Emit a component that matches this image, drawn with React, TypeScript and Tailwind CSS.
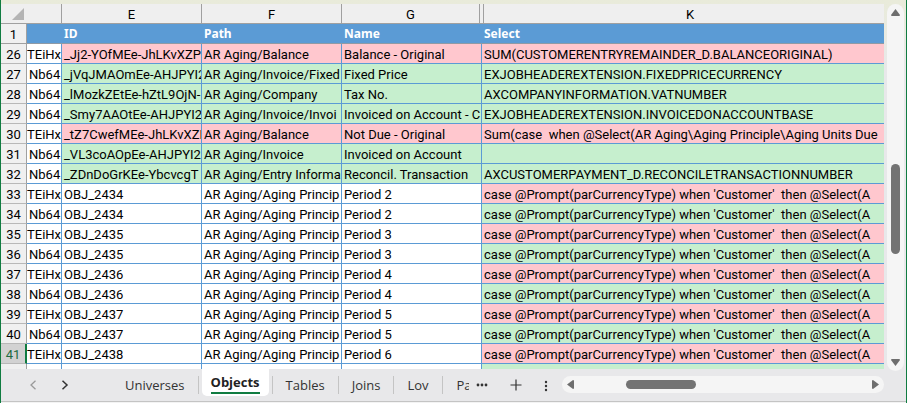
import React, { useState } from 'react';
import clsx from 'clsx';

type Fill = 'red' | 'green' | 'none';

interface Row {
  num: number;
  prev: string;
  id: string;
  path: string;
  name: string;
  select: string;
  fill: Fill;
  selectFill: Fill;
}

const fills: Record<Fill, string> = {
  red: 'bg-[#ffc7ce]',
  green: 'bg-[#c6efce]',
  none: 'bg-white',
};

const objects: [string, string, string, string, Fill][] = [
  ['_Jj2-YOfMEe-JhLKvXZPc', 'AR Aging/Balance', 'Balance - Original', 'SUM(CUSTOMERENTRYREMAINDER_D.BALANCEORIGINAL)', 'red'],
  ['_jVqJMAOmEe-AHJPYI2', 'AR Aging/Invoice/Fixed', 'Fixed Price', 'EXJOBHEADEREXTENSION.FIXEDPRICECURRENCY', 'green'],
  ['_lMozkZEtEe-hZtL9OjN-', 'AR Aging/Company', 'Tax No.', 'AXCOMPANYINFORMATION.VATNUMBER', 'green'],
  ['_Smy7AAOtEe-AHJPYI2', 'AR Aging/Invoice/Invoi', 'Invoiced on Account - C', 'EXJOBHEADEREXTENSION.INVOICEDONACCOUNTBASE', 'green'],
  ['_tZ7CwefMEe-JhLKvXZP', 'AR Aging/Balance', 'Not Due - Original', 'Sum(case  when @Select(AR Aging\\Aging Principle\\Aging Units Due', 'red'],
  ['_VL3coAOpEe-AHJPYI2', 'AR Aging/Invoice', 'Invoiced on Account', '', 'green'],
  ['_ZDnDoGrKEe-YbcvcgT', 'AR Aging/Entry Informa', 'Reconcil. Transaction', 'AXCUSTOMERPAYMENT_D.RECONCILETRANSACTIONNUMBER', 'green'],
];

const periodSelect = "case @Prompt(parCurrencyType) when 'Customer'  then @Select(A";

const rows: Row[] = [
  ...objects.map(([id, path, name, select, fill], i) => ({
    num: 26 + i,
    prev: fill === 'red' ? 'TEiHxI' : 'Nb64.',
    id,
    path,
    name,
    select,
    fill,
    selectFill: fill,
  })),
  ...Array.from({ length: 9 }, (_, i) => ({
    num: 33 + i,
    prev: i % 2 === 0 ? 'TEiHxI' : 'Nb64.',
    id: `OBJ_${2434 + Math.floor(i / 2)}`,
    path: 'AR Aging/Aging Princip',
    name: `Period ${2 + Math.floor(i / 2)}`,
    select: periodSelect,
    fill: 'none' as Fill,
    selectFill: (i % 2 === 0 ? 'red' : 'green') as Fill,
  })),
];

const columns = ['', 'E', 'F', 'G', 'K'];
const titles = ['', 'ID', 'Path', 'Name', 'Select'];
const tabs = ['Universes', 'Objects', 'Tables', 'Joins', 'Lov'];

const arrows = {
  up: 'M4.5 1 L9 7 Q9 8 8 8 H1 Q0 8 0 7 Z',
  down: 'M0 2 Q0 1 1 1 H8 Q9 1 9 2 L4.5 8 Z',
  left: 'M1 4.5 L7 0 Q8 0 8 1 V8 Q8 9 7 9 Z',
  right: 'M1 1 Q1 0 2 0 L8 4.5 L2 9 Q1 9 1 8 Z',
};

const ScrollArrow: React.FC<{ dir: keyof typeof arrows }> = ({ dir }) => (
  <button type="button" aria-label={`Scroll ${dir}`} className="shrink-0">
    <svg className="block h-[9px] w-[9px]" viewBox="0 0 9 9" fill="#6e6e6e">
      <path d={arrows[dir]} />
    </svg>
  </button>
);

const Sheet: React.FC = () => (
  <table className="w-full table-fixed border-separate border-spacing-0 whitespace-pre font-['Roboto',sans-serif] text-[13px] leading-[17px] text-black">
    <colgroup>
      <col className="w-[26px]" />
      <col className="w-[35px]" />
      <col className="w-[140px]" />
      <col className="w-[140px]" />
      <col className="w-[140px]" />
      <col />
    </colgroup>
    <thead>
      <tr className="h-5 bg-[#efefef]">
        <th className="border-b border-[#a0a0a0] p-0">
          <svg className="ml-auto mr-[3px] block h-3 w-3" viewBox="0 0 12 12">
            <path d="M12 0 V12 H0 Z" fill="#b4b4b4" />
          </svg>
        </th>
        {columns.map((col, i) => (
          <th key={i} className={clsx('border-b border-[#a0a0a0] p-0 font-normal', i < 3 && 'border-r')}>
            <div
              className={clsx(
                'h-[19px] border-[#a0a0a0] pt-0.5',
                col === 'G' && 'mr-0.5 border-r',
                col === 'K' && 'ml-px border-l pl-3'
              )}
            >
              {col}
            </div>
          </th>
        ))}
      </tr>
      <tr className="h-5 bg-[#5b9bd5] text-left text-white">
        <th className="border-b border-r border-[#a0a0a0] bg-[#f0f0f0] px-0 pb-0 pt-0.5 text-center font-normal text-black">1</th>
        {titles.map((title, i) => (
          <th key={i} className="border-b border-[#8f9aa5] py-0 pl-0.5 pr-0 font-['Noto_Sans',sans-serif] text-[12px] font-bold">
            {title}
          </th>
        ))}
      </tr>
    </thead>
    <tbody>
      {rows.map(row => (
        <tr key={row.num} className="h-5">
          <th
            className={clsx(
              'border-b border-b-[#b8b8b8] px-0 pb-0 pt-0.5 font-normal',
              row.num === 41
                ? 'border-r-2 border-r-[#107c41] bg-[#d2d2d2] text-[#1e6b41]'
                : 'border-r border-r-[#a0a0a0] bg-[#f0f0f0]'
            )}
          >
            {row.num}
          </th>
          <td
            className={clsx(
              'overflow-hidden border-b border-r border-[#5b9bd5] bg-white pb-0 pr-0 pt-0.5',
              row.prev === 'Nb64.' ? 'pl-0.5' : 'pl-0'
            )}
          >
            {row.prev}
          </td>
          {[row.id, row.path, row.name].map((text, i) => (
            <td key={i} className={clsx('overflow-hidden border-b border-r border-[#5b9bd5] pb-0 pl-0.5 pr-0 pt-0.5', fills[row.fill])}>
              {text}
            </td>
          ))}
          <td className={clsx('overflow-hidden border-b border-[#5b9bd5] pb-0 pl-0.5 pr-0 pt-0.5', fills[row.selectFill])}>
            {row.select}
          </td>
        </tr>
      ))}
      <tr className="h-[5px]">
        <th className="border-r border-[#a0a0a0] bg-[#f0f0f0] p-0" />
        {[0, 1, 2, 3].map(i => (
          <td key={i} className="border-r border-[#5b9bd5] bg-white p-0" />
        ))}
        <td className="bg-[#c6efce] p-0" />
      </tr>
    </tbody>
  </table>
);

const App: React.FC = () => {
  const [active, setActive] = useState('Objects');

  return (
    <div className="flex flex-col border-x border-[#107c41] bg-[#e8e8ea]">
      <div className="flex bg-linear-to-b from-[#e9ebda] to-[#e8e8ea] to-20%">
        <div className="min-w-0 flex-1 pt-1">
          <Sheet />
        </div>
        <div className="-mb-0.5 ml-[3px] mr-0.5 mt-1 flex w-[17px] flex-col items-center rounded-full bg-[#f5f5f5] py-1">
          <ScrollArrow dir="up" />
          <div className="grow-[147]" />
          <div className="h-[90px] w-[9px] rounded-full bg-[#737373]" />
          <div className="grow-[104]" />
          <ScrollArrow dir="down" />
        </div>
      </div>

      <div className="flex h-8 font-['Open_Sans',sans-serif] text-[13px] leading-5 text-[#333333]">
        <div className="flex w-[111px] shrink-0 items-center gap-6 pl-7 pb-px">
          <button type="button" aria-label="Previous sheet">
            <svg className="block h-2.5 w-2" viewBox="0 0 8 10" fill="none" stroke="#999" strokeWidth="1.3">
              <path d="M6.5 0.8 L2 5 L6.5 9.2" />
            </svg>
          </button>
          <button type="button" aria-label="Next sheet">
            <svg className="block h-2.5 w-2" viewBox="0 0 8 10" fill="none" stroke="#333" strokeWidth="1.5">
              <path d="M1.5 0.8 L6 5 L1.5 9.2" />
            </svg>
          </button>
        </div>
        <div className="flex shrink-0">
          {tabs.map(tab => (
            <div key={tab} className="flex items-center">
              {tab === active ? (
                <button
                  type="button"
                  className="mx-[3px] flex h-[27px] items-center self-start rounded-b-[5px] bg-white px-[9px] font-bold text-[#222222]"
                >
                  <span className="border-b-2 border-[#107c41]">{tab}</span>
                </button>
              ) : (
                <button type="button" onClick={() => setActive(tab)} className="h-full px-[13px]">
                  {tab}
                </button>
              )}
              <span className="h-[18px] border-r border-[#c4c4c4]" />
            </div>
          ))}
          <button type="button" className="w-[26px] overflow-hidden pl-[14px] text-left">
            Pa
          </button>
        </div>
        <div className="flex w-[93px] shrink-0 items-center justify-between pl-[7px] pr-[14px]">
          <button type="button" aria-label="More sheets">
            <svg className="block h-1 w-3" viewBox="0 0 12 4" fill="#333">
              <circle cx="2" cy="2" r="1.4" />
              <circle cx="6" cy="2" r="1.4" />
              <circle cx="10" cy="2" r="1.4" />
            </svg>
          </button>
          <button type="button" aria-label="New sheet">
            <svg className="block h-3 w-3" viewBox="0 0 12 12" stroke="#333" strokeWidth="1.2">
              <path d="M6 0.5 V11.5 M0.5 6 H11.5" />
            </svg>
          </button>
          <button type="button" aria-label="Resize tab bar" className="pt-0.5">
            <svg className="block h-3 w-1" viewBox="0 0 4 12" fill="#333">
              <circle cx="2" cy="2" r="1.2" />
              <circle cx="2" cy="6" r="1.2" />
              <circle cx="2" cy="10" r="1.2" />
            </svg>
          </button>
        </div>
        <div className="mb-2 mr-[22px] mt-[7px] flex flex-1 items-center rounded-full bg-[#f5f5f5] px-1">
          <ScrollArrow dir="left" />
          <div className="grow-[51]" />
          <div className="h-[9px] w-[70px] rounded-full bg-[#737373]" />
          <div className="grow-[175]" />
          <ScrollArrow dir="right" />
        </div>
      </div>

      <div className="h-0.5 border-t border-[#c4c4c4] bg-[#f3f3f3]" />
    </div>
  );
};

export default App;
